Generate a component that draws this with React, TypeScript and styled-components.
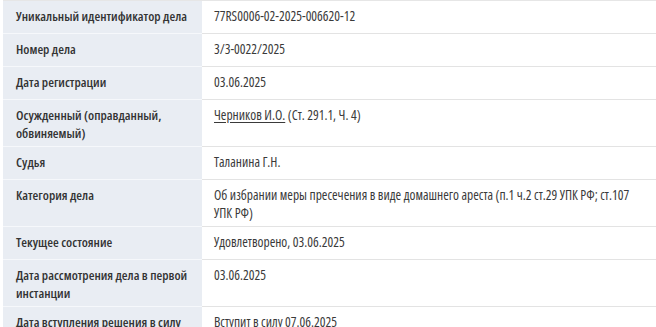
import * as React from 'react';
import styled, { createGlobalStyle } from 'styled-components';

const GlobalStyle = createGlobalStyle`
  html, body {
    margin: 0;
    padding: 0;
    background: #ffffff;
  }
  body {
    font-family: 'Open Sans', 'Noto Sans', sans-serif;
    font-stretch: 75%;
    color: #333333;
  }
`;

const Page = styled.div({
  paddingLeft: '3px',
  overflow: 'hidden',
  height: '327px',
});

const Table = styled.div({
  display: 'grid',
  gridTemplateColumns: '199px 1fr',
  borderTop: '1px solid #e6e6e6',
});

const Label = styled.div({
  background: '#e9edf3',
  borderBottom: '1px solid #f6f8fb',
  padding: '7px 12px 4px 13px',
  minHeight: '21px',
  fontSize: '13.2px',
  lineHeight: '17.5px',
  fontWeight: 600,
  fontStretch: '75%',
  color: '#333333',
});

const Value = styled.div({
  borderBottom: '1px solid #e3e3e3',
  padding: '7px 12px 4px 12px',
  minHeight: '21px',
  fontSize: '13.5px',
  lineHeight: '17.5px',
  fontWeight: 400,
  fontStretch: '75%',
  color: '#3a3a3a',
});

const PersonLink = styled.a({
  color: '#3a3a3a',
  textDecoration: 'underline',
  textUnderlineOffset: '2px',
});

type Row = {
  label: string;
  value: React.ReactNode;
};

const rows: Row[] = [
  { label: 'Уникальный идентификатор дела', value: '77RS0006-02-2025-006620-12' },
  { label: 'Номер дела', value: '3/3-0022/2025' },
  { label: 'Дата регистрации', value: '03.06.2025' },
  {
    label: 'Осужденный (оправданный, обвиняемый)',
    value: (
      <>
        <PersonLink href="#">Черников И.О.</PersonLink> (Ст. 291.1, Ч. 4)
      </>
    ),
  },
  { label: 'Судья', value: 'Таланина Г.Н.' },
  {
    label: 'Категория дела',
    value: 'Об избрании меры пресечения в виде домашнего ареста (п.1 ч.2 ст.29 УПК РФ; ст.107 УПК РФ)',
  },
  { label: 'Текущее состояние', value: 'Удовлетворено, 03.06.2025' },
  { label: 'Дата рассмотрения дела в первой инстанции', value: '03.06.2025' },
  { label: 'Дата вступления решения в силу', value: 'Вступит в силу 07.06.2025' },
];

export default function App() {
  return (
    <Page>
      <GlobalStyle />
      <Table>
        {rows.map((row) => (
          <React.Fragment key={row.label}>
            <Label>{row.label}</Label>
            <Value>{row.value}</Value>
          </React.Fragment>
        ))}
      </Table>
    </Page>
  );
}
